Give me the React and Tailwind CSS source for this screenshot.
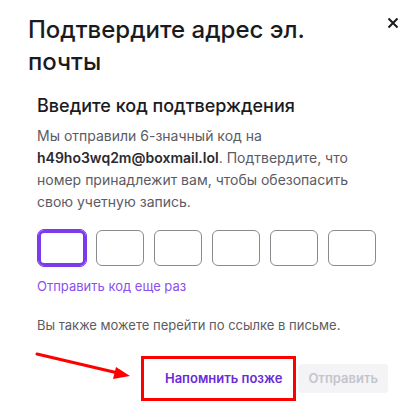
import React from "react";

function App() {
  const boxes = [0, 1, 2, 3, 4, 5];

  return (
    <div className="w-[417px] h-[411px] bg-white relative overflow-hidden font-['Inter',sans-serif]">
      {/* Header */}
      <div className="flex items-start justify-between pl-[28px] pr-[18px] pt-[14px]">
        <h1 className="text-[24px] leading-[32px] font-medium text-[#1b1b1f] w-[300px]">
          Подтвердите адрес эл. почты
        </h1>
        <button type="button" className="mt-[3px] text-[#1b1b1f]" aria-label="Close">
          <svg className="w-[12px] h-[12px]" viewBox="0 0 12 12" fill="none" stroke="currentColor">
            <path strokeWidth={2} d="M1.5 1.5l9 9M10.5 1.5l-9 9" />
          </svg>
        </button>
      </div>

      {/* Body */}
      <div className="pl-[37px] pr-[40px] pt-[16px]">
        <h2 className="text-[18px] leading-[24px] font-medium text-[#1b1b1f]">
          Введите код подтверждения
        </h2>
        <p className="mt-[7px] text-[14px] leading-[22px] text-[#5b5b63]">
          Мы отправили 6-значный код на{" "}
          <span className="font-semibold text-[#2a2a30]">h49ho3wq2m@boxmail.lol</span>. Подтвердите, что
          номер принадлежит вам, чтобы обезопасить свою учетную запись.
        </p>

        <div className="flex gap-[10px] mt-[17px] pl-[1px]">
          {boxes.map((i) => (
            <div
              key={i}
              className={
                i === 0
                  ? "w-[48px] h-[36px] rounded-[6px] border-[3px] border-[#7c3aed] outline-1 outline-[#7c3aed]"
                  : "w-[48px] h-[36px] rounded-[6px] border border-[#8a8a90]"
              }
            />
          ))}
        </div>

        <a className="block mt-[11px] text-[13px] leading-[18px] text-[#8b4ff0]">
          Отправить код еще раз
        </a>

        <p className="mt-[21px] text-[13px] leading-[18px] text-[#5b5b63]">
          Вы также можете перейти по ссылке в письме.
        </p>
      </div>

      {/* Footer buttons */}
      <div className="flex justify-end items-center gap-[2px] pr-[29px] mt-[22px]">
        <div className="border-[3px] border-[#ff0000] pl-[21px] pr-[11px] h-[45px] flex items-center">
          <span className="text-[13px] font-semibold text-[#6a2bd9]">Напомнить позже</span>
        </div>
        <div className="h-[29px] px-[10px] rounded-[4px] bg-[#f4f4f6] flex items-center">
          <span className="text-[13px] font-semibold text-[#c4c4cc]">Отправить</span>
        </div>
      </div>

      {/* Arrow annotation */}
      <svg
        className="absolute left-[34px] top-[349px] w-[100px] h-[34px]"
        viewBox="0 0 100 34"
        fill="none"
      >
        <path d="M3 5 L84 24" stroke="#ff0000" strokeWidth={3} strokeLinecap="round" />
        <path d="M96 27 L82 18 L79 30 Z" fill="#ff0000" />
      </svg>
    </div>
  );
}

export default App;
